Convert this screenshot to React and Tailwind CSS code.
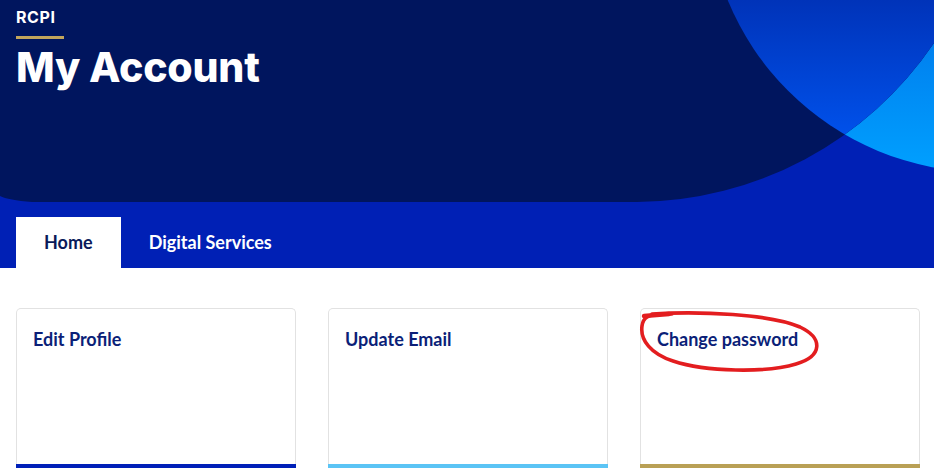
import React from 'react';

const cards = [
  { title: 'Edit Profile', bar: 'bg-[#0020b8]' },
  { title: 'Update Email', bar: 'bg-[#5bc4f5]' },
  { title: 'Change password', bar: 'bg-[#b9a055]' },
];

// Decorative circles behind the header
const HeaderArt = () => (
  <svg className="absolute inset-0 w-full h-full" viewBox="0 0 934 268" preserveAspectRatio="none">
    <defs>
      <linearGradient id="overlap" x1="0" y1="0" x2="0" y2="140" gradientUnits="userSpaceOnUse">
        <stop offset="0" stopColor="#0033b9" />
        <stop offset="1" stopColor="#0052ec" />
      </linearGradient>
      <linearGradient id="light" x1="0" y1="40" x2="0" y2="170" gradientUnits="userSpaceOnUse">
        <stop offset="0" stopColor="#007fee" />
        <stop offset="1" stopColor="#00a0ff" />
      </linearGradient>
      <clipPath id="darkClip">
        <path d="M0 0 H934 V43 A362 362 0 0 1 637 202 H32 Q8 200 0 196 Z" />
      </clipPath>
    </defs>
    <rect width="934" height="268" fill="#0020b5" />
    <circle cx="984" cy="-105" r="277" fill="url(#light)" />
    <path d="M0 0 H934 V43 A362 362 0 0 1 637 202 H32 Q8 200 0 196 Z" fill="#00155e" />
    <circle cx="984" cy="-105" r="277" fill="url(#overlap)" clipPath="url(#darkClip)" />
  </svg>
);

const App = () => {
  return (
    <div className="relative min-h-screen bg-white" style={{ fontFamily: 'Lato, sans-serif' }}>
      {/* Header */}
      <header className="relative h-[268px] overflow-hidden">
        <HeaderArt />
        <div className="relative flex flex-col h-full px-4">
          <div className="pt-[5px] font-['Inter',sans-serif] text-white text-[16px] leading-6 font-bold tracking-[0.6px]">
            RCPI
          </div>
          <div className="mt-[7px] w-12 h-[3px] bg-[#c2a55c]" />
          <h1 className="mt-[4px] font-['Inter',sans-serif] text-white text-[41px] leading-[48px] font-extrabold tracking-[-0.2px]">
            My Account
          </h1>
          <nav className="mt-auto flex items-stretch h-[51px]">
            <button className="px-7 bg-white text-[#0a1a5a] text-[18px] font-bold">Home</button>
            <button className="px-7 text-white text-[18px] font-bold">Digital Services</button>
          </nav>
        </div>
      </header>

      {/* Cards */}
      <main className="pl-4 pt-10 flex gap-8">
        {cards.map((card) => (
          <div
            key={card.title}
            className="shrink-0 w-[280px] h-[160px] flex flex-col bg-white border border-b-0 border-[#e2e2e2] rounded-t-[5px]"
          >
            <h3 className="px-4 pt-[18px] text-[18px] leading-6 font-bold text-[#0b1f78]">{card.title}</h3>
            <div className={`mt-auto h-1 -mx-px ${card.bar}`} />
          </div>
        ))}
      </main>

      {/* Annotation */}
      <svg className="absolute left-0 top-0 pointer-events-none" width="934" height="476" viewBox="0 0 934 476">
        <path
          d="M652 314 C700 311 770 314 800 327 C823 338 823 356 796 364 C766 373 706 372 673 361 C651 354 640 340 642 326 C643 318 648 314 662 314 L672 314"
          fill="none"
          stroke="#e31d1f"
          strokeWidth="3.6"
          strokeLinecap="round"
        />
        <path d="M644 316 L669 314" stroke="#e31d1f" strokeWidth="4.5" strokeLinecap="round" />
      </svg>
    </div>
  );
};

export default App;
